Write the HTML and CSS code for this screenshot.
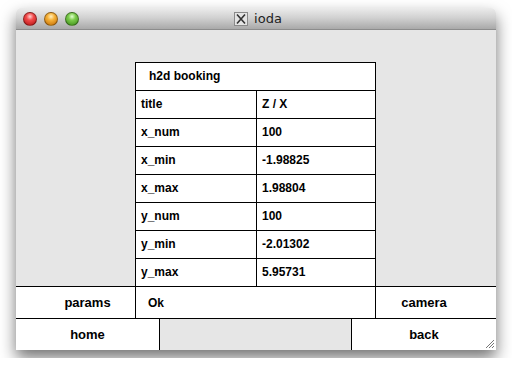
FILE: index.html
```html
<!DOCTYPE html>
<html lang="en">
<head>
  <meta charset="UTF-8">
  <title>ioda</title>
  <link rel="stylesheet" href="styles.css">
</head>
<body>
  <div class="window">
    <div class="titlebar">
      <div class="lights">
        <span class="light red"></span>
        <span class="light orange"></span>
        <span class="light green"></span>
      </div>
      <div class="title">
        <svg class="x-icon" width="14" height="14" viewBox="0 0 14 14">
          <rect x="0.5" y="0.5" width="13" height="13" fill="#e4e4e4" stroke="#8a8a8a"/>
          <path d="M3 2.5 L11 11.5 M11 2.5 L3 11.5" stroke="#333" stroke-width="1.6"/>
        </svg>
        <span>ioda</span>
      </div>
    </div>

    <div class="content">
      <div class="canvas"></div>

      <div class="row top">
        <button class="btn left">params</button>
        <div class="gap"></div>
        <button class="btn right">camera</button>
      </div>
      <div class="row bottom">
        <button class="btn left">home</button>
        <div class="gap"></div>
        <button class="btn right">back</button>
      </div>

      <!-- booking dialog sits over the buttons -->
      <div class="dialog">
        <div class="dlg-head">h2d booking</div>
        <div class="dlg-row"><span class="key">title</span><span class="val">Z / X</span></div>
        <div class="dlg-row"><span class="key">x_num</span><span class="val">100</span></div>
        <div class="dlg-row"><span class="key">x_min</span><span class="val">-1.98825</span></div>
        <div class="dlg-row"><span class="key">x_max</span><span class="val">1.98804</span></div>
        <div class="dlg-row"><span class="key">y_num</span><span class="val">100</span></div>
        <div class="dlg-row"><span class="key">y_min</span><span class="val">-2.01302</span></div>
        <div class="dlg-row"><span class="key">y_max</span><span class="val">5.95731</span></div>
        <div class="dlg-ok">Ok</div>
      </div>

      <svg class="grip" width="12" height="12" viewBox="0 0 12 12">
        <path d="M11 3 L3 11 M11 6 L6 11 M11 9 L9 11" stroke="#777" stroke-width="1"/>
      </svg>
    </div>
  </div>
</body>
</html>
```

FILE: styles.css
```css
body {
  margin: 0;
  background-color: #ffffff;
  font-family: "Liberation Sans", Arial, sans-serif;
}

.window {
  margin: 8px 16px;
  width: 480px;
  height: 342px;
  display: flex;
  flex-direction: column;
  border-radius: 5px 5px 0 0;
  box-shadow: 0 8px 16px rgba(0, 0, 0, 0.55);
}

.titlebar {
  height: 22px;
  flex-shrink: 0;
  position: relative;
  display: flex;
  align-items: center;
  justify-content: center;
  border-radius: 5px 5px 0 0;
  background: linear-gradient(#ececec, #d2d2d2 45%, #a9a9a9);
  border-bottom: 1px solid #8c8c8c;
  box-sizing: border-box;
}

.lights {
  position: absolute;
  left: 7px;
  top: 4px;
  display: flex;
  gap: 7px;
}

.light {
  width: 14px;
  height: 14px;
  border-radius: 50%;
  box-sizing: border-box;
  border: 1px solid rgba(0, 0, 0, 0.35);
}
.light.red {
  background: radial-gradient(circle at 50% 30%, #ffd0d0 0, #f24b4b 35%, #b01010 100%);
}
.light.orange {
  background: radial-gradient(circle at 50% 30%, #fff0c0 0, #f6b23a 35%, #c06a00 100%);
}
.light.green {
  background: radial-gradient(circle at 50% 30%, #e2ffd0 0, #7ccc4c 35%, #3a8a16 100%);
}

.title {
  display: flex;
  align-items: center;
  gap: 6px;
  font-family: "DejaVu Sans", "Liberation Sans", sans-serif;
  font-size: 13px;
  color: #222;
  margin-left: 4px;
}

.content {
  flex: 1;
  position: relative;
  display: flex;
  flex-direction: column;
  background-color: #e6e6e6;
}

.canvas {
  flex: 1;
}

.row {
  height: 32px;
  flex-shrink: 0;
  display: flex;
  box-sizing: border-box;
}

.row .gap {
  flex: 1;
}

.row.top .btn {
  border-top: 1px solid #000;
}

.row.bottom {
  border-top: 1px solid #000;
}

.btn {
  width: 144px;
  font-family: "Liberation Sans", Arial, sans-serif;
  font-weight: bold;
  font-size: 13px;
  color: #000;
  background-color: #fff;
  border: none;
  padding: 0;
  margin: 0;
  box-sizing: border-box;
}

.btn.left {
  border-right: 1px solid #000;
}
.btn.right {
  width: 145px;
  border-left: 1px solid #000;
}

.dialog {
  position: absolute;
  left: 119px;
  top: 32px;
  width: 241px;
  height: 256px;
  display: flex;
  flex-direction: column;
  background-color: #fff;
  border: 1px solid #000;
  border-bottom: none;
  box-sizing: border-box;
  font-size: 12px;
  font-weight: bold;
  color: #000;
}

.dlg-head {
  height: 28px;
  line-height: 27px;
  padding-left: 13px;
  border-bottom: 1px solid #000;
  box-sizing: border-box;
}

.dlg-row {
  display: flex;
  height: 28px;
  border-bottom: 1px solid #000;
  box-sizing: border-box;
}

.dlg-row .key {
  width: 115px;
  padding-left: 5px;
  line-height: 27px;
  border-right: 1px solid #000;
}

.dlg-row .val {
  padding-left: 5px;
  line-height: 27px;
}

.dlg-ok {
  flex: 1;
  display: flex;
  align-items: center;
  padding-left: 12px;
}

.grip {
  position: absolute;
  right: 1px;
  bottom: 1px;
}
```
